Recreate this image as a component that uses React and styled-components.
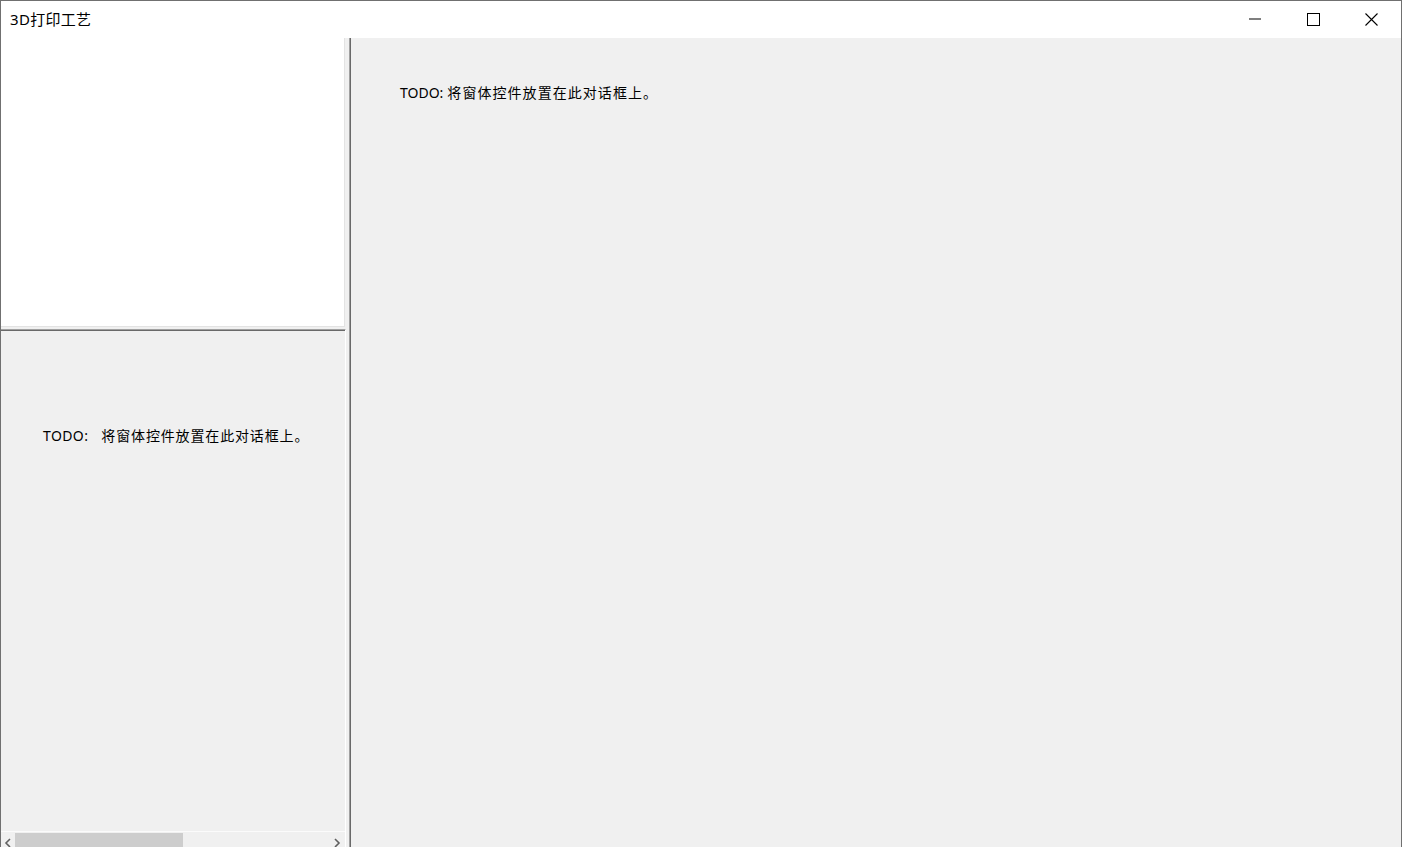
import React from "react";
import styled, { createGlobalStyle } from "styled-components";

const GlobalStyle = createGlobalStyle`
  html, body {
    margin: 0;
    padding: 0;
    overflow: hidden;
    background: #ffffff;
  }
  body {
    font-family: "Noto Sans", "Noto Sans CJK SC", sans-serif;
    color: #000;
  }
`;

const Window = styled.div`
  width: 1402px;
  height: 847px;
  box-sizing: border-box;
  border: 1px solid #707070;
  border-bottom: none;
  display: flex;
  flex-direction: column;
  overflow: hidden;
  background: #ffffff;
`;

const TitleBar = styled.div`
  height: 37px;
  flex: none;
  display: flex;
  align-items: center;
  background: #ffffff;
`;

const Title = styled.div`
  flex: 1;
  padding-left: 9px;
  padding-bottom: 1px;
  font-family: "Noto Sans", "Noto Sans CJK SC", sans-serif;
  font-size: 15px;
  letter-spacing: 0.3px;
  line-height: 20px;
  color: #000;
`;

const Controls = styled.div`
  display: flex;
  height: 100%;
  margin-right: 1px;
`;

const ControlButton = styled.div`
  width: 58px;
  height: 100%;
  display: flex;
  align-items: center;
  justify-content: center;
  padding-bottom: 1px;
  box-sizing: border-box;
`;

const Body = styled.div`
  flex: 1;
  min-height: 0;
  display: flex;
  background: #f0f0f0;
`;

const LeftColumn = styled.div`
  width: 345px;
  flex: none;
  display: flex;
  flex-direction: column;
`;

const TopPane = styled.div`
  width: 344px;
  height: 289px;
  flex: none;
  box-sizing: border-box;
  background: #ffffff;
  border-right: 1px solid #e3e3e3;
  border-bottom: 1px solid #e3e3e3;
  margin-bottom: 2px;
`;

const LowerPane = styled.div`
  flex: 1;
  min-height: 0;
  display: flex;
  flex-direction: column;
  box-sizing: border-box;
  border-top: 1px solid #a0a0a0;
  border-right: 1px solid #ffffff;
  box-shadow: inset 0 1px 0 #696969;
  background: #f0f0f0;
`;

const DialogText = styled.div`
  flex: 1;
  padding-top: ${(p) => p.$top}px;
  padding-left: ${(p) => p.$left}px;
  font-family: "Noto Sans", "Noto Sans CJK SC", sans-serif;
  font-size: 14px;
  line-height: 20px;
  letter-spacing: ${(p) => p.$spacing}px;
  color: #000;
  white-space: pre;
`;

const TodoLabel = styled.span`
  letter-spacing: ${(p) => p.$spacing}px;
  margin-right: ${(p) => p.$gap}px;
`;

const ScrollBar = styled.div`
  height: 16px;
  flex: none;
  display: flex;
  box-sizing: border-box;
  border-top: 1px solid #fbfbfb;
  background: #f0f0f0;
`;

const ArrowButton = styled.div`
  width: ${(p) => p.$w}px;
  flex: none;
  display: flex;
  justify-content: center;
  align-items: flex-start;
  padding-top: 6px;
  box-sizing: border-box;
`;

const Track = styled.div`
  flex: 1;
  padding-top: 1px;
`;

const Thumb = styled.div`
  width: 168px;
  height: 100%;
  background: #cdcdcd;
`;

const Splitter = styled.div`
  width: 5px;
  flex: none;
  background: #f0f0f0;
  box-shadow: inset -1px 0 0 #696969, inset -2px 0 0 #a0a0a0;
`;

const RightPane = styled.div`
  flex: 1;
  display: flex;
  background: #f0f0f0;
`;

const Chevron = ({ dir }) => (
  <svg width="8" height="10" viewBox="0 0 8 10">
    <path
      d={dir === "left" ? "M6 1 L2 5 L6 9" : "M2 1 L6 5 L2 9"}
      fill="none"
      stroke="#606060"
      strokeWidth="1.6"
    />
  </svg>
);

export default function App() {
  return (
    <>
      <GlobalStyle />
      <Window>
        <TitleBar>
          <Title>3D打印工艺</Title>
          <Controls>
            <ControlButton>
              <svg width="12" height="12" viewBox="0 0 12 12">
                <rect x="0" y="5.5" width="12" height="1" fill="#000" />
              </svg>
            </ControlButton>
            <ControlButton>
              <svg width="13" height="13" viewBox="0 0 13 13">
                <rect x="0.5" y="0.5" width="12" height="12" fill="none" stroke="#000" strokeWidth="1" />
              </svg>
            </ControlButton>
            <ControlButton>
              <svg width="13" height="13" viewBox="0 0 13 13">
                <path d="M0.5 0.5 L12.5 12.5 M12.5 0.5 L0.5 12.5" stroke="#000" strokeWidth="1.1" fill="none" />
              </svg>
            </ControlButton>
          </Controls>
        </TitleBar>
        <Body>
          <LeftColumn>
            <TopPane />
            <LowerPane>
              <DialogText $top={96} $left={42} $spacing={0.85}>
                <TodoLabel $spacing={0.4} $gap={13}>TODO:</TodoLabel>将窗体控件放置在此对话框上。
              </DialogText>
              <ScrollBar>
                <ArrowButton $w={14}>
                  <Chevron dir="left" />
                </ArrowButton>
                <Track>
                  <Thumb />
                </Track>
                <ArrowButton $w={17}>
                  <Chevron dir="right" />
                </ArrowButton>
              </ScrollBar>
            </LowerPane>
          </LeftColumn>
          <Splitter />
          <RightPane>
            <DialogText $top={45} $left={49} $spacing={1.05}>
              <TodoLabel $spacing={0} $gap={4}>TODO:</TodoLabel>将窗体控件放置在此对话框上。
            </DialogText>
          </RightPane>
        </Body>
      </Window>
    </>
  );
}
